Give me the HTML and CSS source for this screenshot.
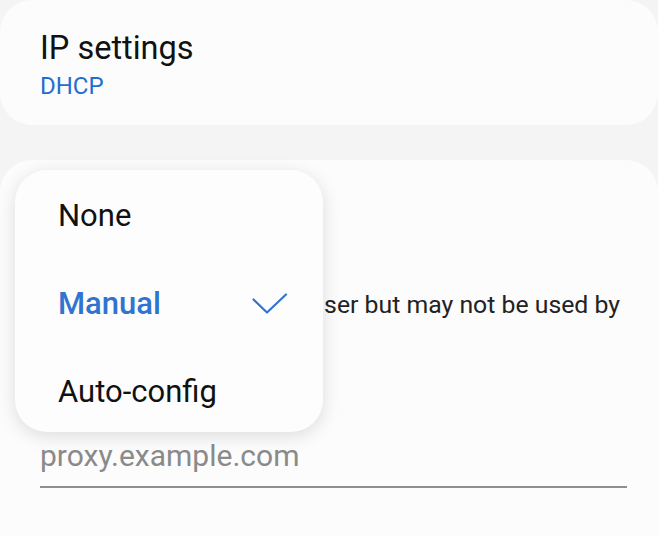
FILE: index.html
```html
<!DOCTYPE html>
<html lang="en">
<head>
    <meta charset="UTF-8">
    <meta name="viewport" content="width=device-width, initial-scale=1.0">
    <title>Wi-Fi advanced settings</title>
    <link rel="stylesheet" href="styles.css">
</head>
<body>

    <div class="card ip-card">
        <div class="item-title">IP settings</div>
        <div class="item-value">DHCP</div>
    </div>

    <div class="card proxy-card">
        <!-- the start of the description sits under the open menu -->
        <div class="desc">
            <span>ser but may not be used by</span>
        </div>

        <div class="field-input">
            <span class="hint">proxy.example.com</span>
        </div>

        <!-- Dropdown opened from the Proxy row -->
        <ul class="popup-menu">
            <li class="menu-item">None</li>
            <li class="menu-item selected">
                <span>Manual</span>
                <svg class="check" width="36" height="22" viewBox="0 0 36 22">
                    <polyline points="1.5,6.5 15,19.5 34,1.5" fill="none" stroke="#2f74cf" stroke-width="2.2" stroke-linecap="round" stroke-linejoin="round"/>
                </svg>
            </li>
            <li class="menu-item">Auto-config</li>
        </ul>
    </div>

</body>
</html>
```

FILE: styles.css
```css
html,
body {
    margin: 0;
    height: 100%;
    overflow: hidden;
}

body {
    font-family: 'Roboto', 'Noto Sans', sans-serif;
    background-color: #f4f4f4;
    color: #111;
}

.card {
    background-color: #fcfcfc;
    border-radius: 32px;
}

.ip-card {
    padding: 28px 40px 24px;
}

.item-title {
    font-size: 32.5px;
    line-height: 40px;
}

.item-value {
    font-size: 24px;
    line-height: 30px;
    margin-top: 3px;
    color: #1f6fd0;
}

.proxy-card {
    position: relative;
    margin-top: 35px;
    padding: 129px 31px 90px 40px;
}

.desc {
    display: flex;
    justify-content: flex-end;
    padding-right: 7px;
    white-space: nowrap;
    font-size: 24.8px;
    line-height: 32px;
    color: #222;
}

.field-input {
    margin-top: 115px;
    padding-bottom: 10px;
    border-bottom: 2px solid #8f8f8f;
    font-size: 30px;
    line-height: 40px;
}

.hint {
    color: #8a8a8a;
}

.popup-menu {
    position: absolute;
    left: 15px;
    top: 10px;
    width: 308px;
    height: 262px;
    box-sizing: border-box;
    margin: 0;
    padding: 1px 35px 0 43px;
    list-style: none;
    background-color: #fdfdfd;
    border-radius: 32px;
    box-shadow: 0 4px 18px rgba(0, 0, 0, 0.13);
}

.menu-item {
    display: flex;
    align-items: center;
    justify-content: space-between;
    height: 88px;
    font-size: 31px;
    color: #111;
}

.menu-item.selected {
    color: #2f74cf;
    font-weight: 500;
}

.check {
    display: block;
    margin-top: 1px;
}
```
